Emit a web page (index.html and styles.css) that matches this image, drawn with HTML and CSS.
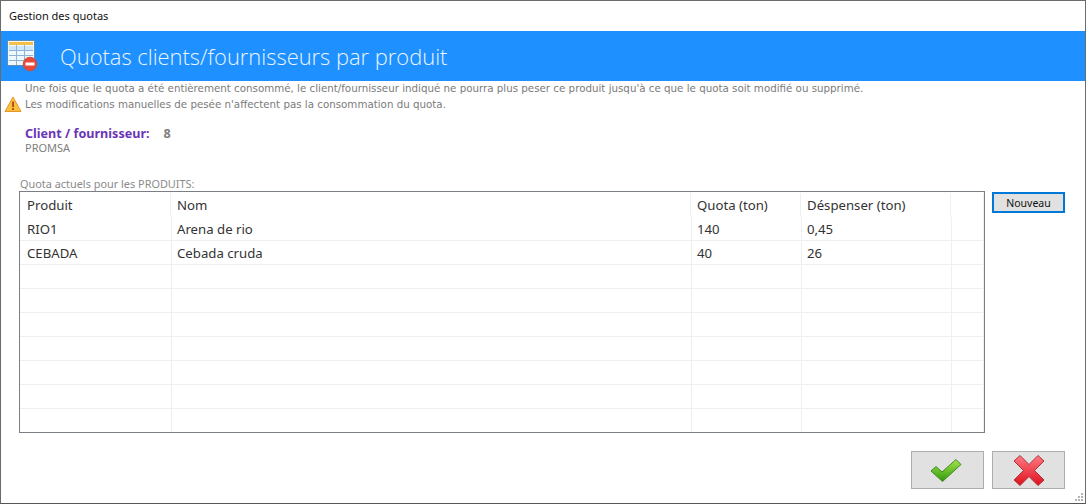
FILE: index.html
```html
<!DOCTYPE html>
<html lang="fr">
<head>
<meta charset="utf-8">
<title>Gestion des quotas</title>
<link rel="stylesheet" href="styles.css">
</head>
<body>
<div class="window">
  <div class="titlebar">Gestion des quotas</div>
  <header class="banner">
    <svg class="banner-icon" width="32" height="32" viewBox="0 0 32 32">
      <rect x="0.500" y="0.500" width="27" height="25" fill="#eef8ff" stroke="#5b8fb5"/>
      <rect x="2" y="2" width="24" height="3" fill="#f5c04a"/>
      <path d="M2 10.500h24M2 15.500h24M2 20.500h24M9.500 5v20M17.500 5v20" stroke="#8fb3d4" fill="none"/>
      <rect x="2" y="6" width="7" height="4" fill="#cfe6fa"/><rect x="10" y="6" width="7" height="4" fill="#cfe6fa"/><rect x="18" y="6" width="8" height="4" fill="#cfe6fa"/>
      <circle cx="23" cy="24" r="6.800" fill="#e8483a" stroke="#c8503f"/>
      <rect x="18.500" y="22.500" width="9" height="3" fill="#fff"/>
    </svg>
    <h1 class="banner-title">Quotas clients/fournisseurs par produit</h1>
  </header>
  <section class="notice">
    <svg class="warn" width="18" height="17" viewBox="0 0 18 17">
      <path d="M9 1 17 15.500H1Z" fill="#f9c23c" stroke="#e8932a" stroke-linejoin="round"/>
      <rect x="8" y="5.500" width="2" height="5.500" fill="#c0501c"/>
      <rect x="8" y="12" width="2" height="2" fill="#c0501c"/>
    </svg>
    <p class="notice-text">Une fois que le quota a été entièrement consommé, le client/fournisseur indiqué ne pourra plus peser ce produit jusqu'à ce que le quota soit modifié ou supprimé.<br>Les modifications manuelles de pesée n'affectent pas la consommation du quota.</p>
  </section>
  <section class="client">
    <div class="client-row"><span class="client-label">Client / fournisseur:</span><span class="client-code">8</span></div>
    <div class="client-name">PROMSA</div>
  </section>
  <div class="grid-caption">Quota actuels pour les PRODUITS:</div>
  <section class="content">
    <div class="table">
      <div class="row head"><div>Produit</div><div>Nom</div><div>Quota (ton)</div><div>Déspenser (ton)</div><div></div></div>
      <div class="row"><div>RIO1</div><div>Arena de rio</div><div>140</div><div>0,45</div><div></div></div>
      <div class="row"><div>CEBADA</div><div>Cebada cruda</div><div>40</div><div>26</div><div></div></div>
      <div class="row"><div></div><div></div><div></div><div></div><div></div></div>
      <div class="row"><div></div><div></div><div></div><div></div><div></div></div>
      <div class="row"><div></div><div></div><div></div><div></div><div></div></div>
      <div class="row"><div></div><div></div><div></div><div></div><div></div></div>
      <div class="row"><div></div><div></div><div></div><div></div><div></div></div>
      <div class="row"><div></div><div></div><div></div><div></div><div></div></div>
      <div class="row last"><div></div><div></div><div></div><div></div><div></div></div>
    </div>
    <button class="new-btn">Nouveau</button>
  </section>
  <footer class="actions">
    <button class="icon-btn" aria-label="OK">
      <svg class="check" width="34" height="26" viewBox="0 0 34 26">
        <defs><linearGradient id="g" x1="0" y1="0" x2="0" y2="1"><stop offset="0" stop-color="#a6e34a"/><stop offset="1" stop-color="#2f9a0c"/></linearGradient></defs>
        <path d="M2 14 7 9.500 13 15 27 2.500 32 7.500 13.500 24.500Z" fill="url(#g)" stroke="#3f8a22" stroke-linejoin="round"/>
      </svg>
    </button>
    <button class="icon-btn" aria-label="Annuler">
      <svg width="32" height="33" viewBox="0 0 32 33">
        <defs><linearGradient id="r" x1="0" y1="0" x2="0" y2="1"><stop offset="0" stop-color="#ff7a84"/><stop offset="1" stop-color="#e0101c"/></linearGradient></defs>
        <path d="M7 1.500 16 10.500 25 1.500 31 7 21.500 16.500 31 26 25 31.500 16 22.500 7 31.500 1 26 10.500 16.500 1 7Z" fill="url(#r)" stroke="#a8323a" stroke-linejoin="round"/>
      </svg>
    </button>
  </footer>
  <svg class="grip" width="9" height="9" viewBox="0 0 9 9"><path d="M6 0h2v2H6zM3 3h2v2H3zM6 3h2v2H6zM0 6h2v2H0zM3 6h2v2H3zM6 6h2v2H6z" fill="#b5b5b5"/></svg>
</div>
</body>
</html>
```
FILE: styles.css
```css
* { box-sizing: border-box; }
html, body { margin: 0; height: 100%; background: #fff; overflow: hidden; }
body { font-family: "Noto Sans", "Open Sans", sans-serif; color: #222; }
.window { position: relative; width: 1086px; height: 504px; border: 1px solid #6b6b6b; border-bottom-color: #555; background: #fff; display: flex; flex-direction: column; }
.titlebar { height: 30px; padding: 7px 0 0 8px; font-size: 11px; line-height: 15px; color: #111; }
.banner { height: 50px; background: #1e90ff; display: flex; align-items: flex-start; flex: none; }
.banner-icon { margin: 9px 0 0 6px; flex: none; }
.banner-title { margin: 11px 0 0 21px; font-family: "Open Sans", sans-serif; font-weight: 300; font-size: 21.900px; line-height: 30px; color: #eaf5ff; }
.notice { display: flex; align-items: flex-end; height: 31px; padding-left: 3px; }
.warn { flex: none; margin-bottom: -1px; }
.notice-text { margin: 0 0 0 3px; font-family: "DejaVu Sans", sans-serif; font-size: 10.290px; line-height: 16px; color: #7b7b7b; white-space: nowrap; }
.client { padding: 13px 0 0 24px; height: 55px; }
.client-row { display: flex; height: 16px; align-items: center; font-size: 12.600px; font-weight: 700; }
.client-label { color: #6a35b5; }
.client-code { color: #7f7f7f; margin-left: 14px; }
.client-name { font-size: 11px; line-height: 13px; color: #808080; }
.grid-caption { font-size: 10.900px; line-height: 13px; color: #8a8a8a; padding-left: 19px; height: 14px; margin-top: 10px; }
.content { display: flex; align-items: flex-start; padding-left: 18px; }
.table { width: 966px; height: 242px; border: 1px solid #7a7f86; overflow: hidden; flex: none; }
.row { display: grid; grid-template-columns: 152px 520px 110px 150px 32px; height: 24px; font-size: 13.200px; line-height: 22px; color: #333; border-bottom: 1px solid #efefef; }
.row > div { padding: 1px 0 0 5px; border-right: 1px solid #efefef; height: 100%; }
.row > div:first-child { padding-left: 7px; }
.row.head { height: 25px; border-bottom: 0; padding-top: 1px; grid-template-columns: 151px 520px 110px 150px 33px; }
.row.head > div { padding-left: 6px; }
.row.head > div:first-child { padding-left: 7px; }
.row.last { border-bottom: 0; }
.new-btn { margin: 1px 0 0 7px; width: 73px; height: 21px; padding: 0; border: 2px solid #0078d7; background: #e1e1e1; font: 10.500px "Noto Sans", sans-serif; color: #111; }
.actions { display: flex; justify-content: flex-end; gap: 8px; padding: 18px 20px 0 0; }
.icon-btn { width: 73px; height: 38px; padding: 0; border: 1px solid #adadad; background: #e1e1e1; display: flex; align-items: center; justify-content: center; }
.check { margin-left: -4px; }
.grip { position: absolute; right: 1px; bottom: 1px; }
```
